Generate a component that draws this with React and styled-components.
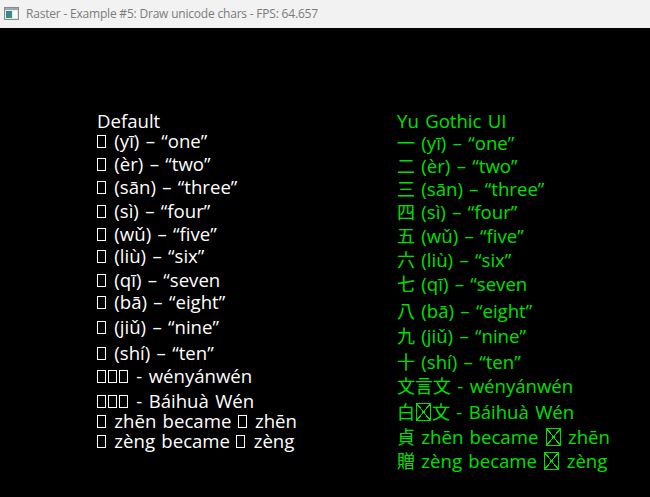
import React from 'react'
import styled, { createGlobalStyle } from 'styled-components'

const GlobalStyle = createGlobalStyle`
  html, body {
    margin: 0;
    padding: 0;
    background: #000;
  }
`

// [cjk, rest, step, cjk2, rest2] - step is distance from previous baseline
const leftLines = [
  [null, 'Default', 0],
  ['一', ' (yī) – “one”', 20],
  ['二', ' (èr) – “two”', 23],
  ['三', ' (sān) – “three”', 23],
  ['四', ' (sì) – “four”', 24],
  ['五', ' (wǔ) – “five”', 23],
  ['六', ' (liù) – “six”', 22],
  ['七', ' (qī) – “seven', 24],
  ['八', ' (bā) – “eight”', 22],
  ['九', ' (jiǔ) – “nine”', 25],
  ['十', ' (shí) – “ten”', 26],
  ['文言文', ' - wényánwén', 23],
  ['白話文', ' - Báihuà Wén', 25],
  ['貞', ' zhēn became ', 20, '贞', ' zhēn'],
  ['贈', ' zèng became ', 20, '赠', ' zèng'],
]

const rightLines = [
  [null, 'Yu Gothic UI', 0],
  ['一', ' (yī) – “one”', 21],
  ['二', ' (èr) – “two”', 23],
  ['三', ' (sān) – “three”', 23],
  ['四', ' (sì) – “four”', 23],
  ['五', ' (wǔ) – “five”', 24],
  ['六', ' (liù) – “six”', 24],
  ['七', ' (qī) – “seven', 24],
  ['八', ' (bā) – “eight”', 27],
  ['九', ' (jiǔ) – “nine”', 25],
  ['十', ' (shí) – “ten”', 26],
  ['文言文', ' - wényánwén', 24],
  ['白話文', ' - Báihuà Wén', 26],
  ['貞', ' zhēn became ', 25, '贞', ' zhēn'],
  ['贈', ' zèng became ', 24, '赠', ' zèng'],
]

const missingInYu = ['話', '贞', '赠']

const renderYu = (chars) =>
  Array.from(chars).map((c, j) =>
    missingInYu.includes(c) ? (
      <CrossTofu key={j} title={c} />
    ) : (
      <Han key={j}>{c}</Han>
    )
  )

const App = () => {
  return (
    <Window>
      <GlobalStyle />
      <TitleBar>
        <AppIcon />
        <Title>Raster - Example #5: Draw unicode chars - FPS: 64.657</Title>
      </TitleBar>

      <Canvas>
        <Column $color="#ffffff">
          {leftLines.map(([cjk, rest, step, cjk2, rest2], i) => (
            <Line key={i} $step={step}>
              {cjk && Array.from(cjk).map((c, j) => <Tofu key={j} title={c} />)}
              {rest}
              {cjk2 && <Tofu title={cjk2} />}
              {rest2}
            </Line>
          ))}
        </Column>

        <Column $color="#00e000">
          {rightLines.map(([cjk, rest, step, cjk2, rest2], i) => (
            <Line key={i} $step={step}>
              {cjk && renderYu(cjk)}
              {rest}
              {cjk2 && renderYu(cjk2)}
              {rest2}
            </Line>
          ))}
        </Column>
      </Canvas>
    </Window>
  )
}

const AppIcon = () => (
  <svg width="15" height="13" viewBox="0 0 15 13">
    <defs>
      <linearGradient id="ig" x1="0" y1="0" x2="1" y2="1">
        <stop offset="0" stopColor="#2d7fb8" />
        <stop offset="1" stopColor="#3f9a5a" />
      </linearGradient>
    </defs>
    <rect x="0.5" y="0.5" width="14" height="12" fill="#e8e8e8" stroke="#8a8a8a" />
    <rect x="1" y="1" width="13" height="2" fill="#9aa7b4" />
    <rect x="2" y="4" width="6" height="7" fill="url(#ig)" />
    <rect x="9" y="4" width="4" height="7" fill="#ffffff" />
  </svg>
)

const Window = styled.div`
  width: 650px;
  height: 497px;
  display: flex;
  flex-direction: column;
  background: #000;
  overflow: hidden;
`

const TitleBar = styled.div`
  height: 28px;
  flex: none;
  display: flex;
  align-items: center;
  gap: 7px;
  padding: 0 0 2px 4px;
  box-sizing: border-box;
  background: #f2f2f2;
`

const Title = styled.span`
  font-family: 'Open Sans', 'Noto Sans', sans-serif;
  font-size: 12px;
  letter-spacing: -0.2px;
  color: #7c7c7c;
  white-space: nowrap;
`

const Canvas = styled.div`
  flex: 1;
  display: grid;
  grid-template-columns: 300px 1fr;
  padding: 83px 0 0 97px;
  background: #000;
`

const Column = styled.div`
  display: flex;
  flex-direction: column;
  color: ${({ $color }) => $color};
  font-family: 'Open Sans', 'Noto Sans CJK JP', sans-serif;
  font-size: 18.6px;
  word-spacing: 1.5px;
`

const Line = styled.div`
  line-height: 20px;
  height: 20px;
  white-space: pre;
  margin-top: ${({ $step }) => ($step ? $step - 20 : 0)}px;
`

const Han = styled.span`
  font-family: 'Noto Sans CJK JP', sans-serif;
  font-size: 18px;
`

const Tofu = styled.span`
  display: inline-block;
  width: 9px;
  height: 13px;
  margin-right: 2px;
  box-sizing: border-box;
  border: 1px solid currentColor;
  vertical-align: 0;
`

const CrossTofu = styled.span`
  display: inline-block;
  width: 15px;
  height: 18px;
  margin: 0 1px;
  box-sizing: border-box;
  border: 1px solid currentColor;
  vertical-align: -2px;
  background:
    linear-gradient(to top right, transparent calc(50% - 0.6px), currentColor calc(50% - 0.6px), currentColor calc(50% + 0.6px), transparent calc(50% + 0.6px)),
    linear-gradient(to bottom right, transparent calc(50% - 0.6px), currentColor calc(50% - 0.6px), currentColor calc(50% + 0.6px), transparent calc(50% + 0.6px));
`

export default App
